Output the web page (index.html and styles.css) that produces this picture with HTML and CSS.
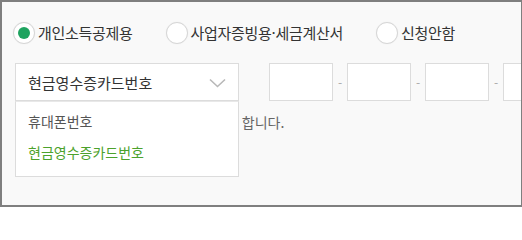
FILE: index.html
```html
<!DOCTYPE html>
<html lang="ko">
<head>
<meta charset="utf-8">
<link rel="stylesheet" href="styles.css">
</head>
<body>
<div class="frame">
  <div class="radios">
    <label class="radio">
      <span class="dot checked"></span>
      <span class="rlabel">개인소득공제용</span>
    </label>
    <label class="radio">
      <span class="dot"></span>
      <span class="rlabel">사업자증빙용·세금계산서</span>
    </label>
    <label class="radio">
      <span class="dot"></span>
      <span class="rlabel">신청안함</span>
    </label>
  </div>
  <div class="inputs">
    <div class="select-wrap">
      <div class="select">
        <span class="sel-text">현금영수증카드번호</span>
        <svg class="chev" width="17" height="10" viewBox="0 0 17 10"><path d="M1 1.5 L8.5 8.5 L16 1.5" fill="none" stroke="#b8b8b8" stroke-width="1.6"/></svg>
      </div>
      <ul class="menu">
        <li>휴대폰번호</li>
        <li class="active">현금영수증카드번호</li>
      </ul>
    </div>
    <div class="nums">
      <span class="box"></span><span class="dash">-</span>
      <span class="box"></span><span class="dash">-</span>
      <span class="box"></span><span class="dash">-</span>
      <span class="box"></span>
    </div>
  </div>
  <p class="note">카드번호 또는 휴대폰번호를 입력해야 합니다.</p>
</div>
</body>
</html>
```
FILE: styles.css
```css
html, body {
  margin: 0;
  padding: 0;
  background: #fff;
}
.frame {
  width: 522px;
  height: 207px;
  box-sizing: border-box;
  border: 2px solid #7f7f7f;
  border-right-width: 1px;
  background: #f9f9f9;
  padding: 20px 0 0 11px;
  overflow: hidden;
  font-family: "Noto Sans CJK KR", "Noto Sans", sans-serif;
  color: #333;
  position: relative;
}
.radios {
  display: flex;
  align-items: center;
  gap: 33px;
  height: 22px;
}
.radio {
  display: flex;
  align-items: center;
  gap: 3px;
}
.dot {
  width: 22px;
  height: 22px;
  box-sizing: border-box;
  border: 1px solid #d6d6d6;
  border-radius: 50%;
  background: #fff;
  display: flex;
  align-items: center;
  justify-content: center;
  box-shadow: 0 0 1px #e6e6e6;
}
.dot.checked::after {
  content: "";
  width: 12px;
  height: 12px;
  border-radius: 50%;
  background: #1ea35f;
}
.rlabel {
  font-size: 15px;
  line-height: 22px;
  color: #333;
  letter-spacing: -0.3px;
}
.inputs {
  display: flex;
  margin-top: 19px;
  margin-left: 2px;
  gap: 30px;
  position: relative;
  z-index: 2;
}
.select-wrap {
  position: relative;
}
.select {
  width: 224px;
  height: 38px;
  box-sizing: border-box;
  border: 1px solid #dcdcdc;
  background: #fff;
  display: flex;
  align-items: center;
  padding: 0 12px 0 12px;
  font-size: 15px;
  color: #333;
}
.sel-text {
  flex: 1;
}
.chev {
  display: block;
  margin-top: 2px;
}
.menu {
  position: absolute;
  left: 0;
  top: 38px;
  width: 224px;
  height: 76px;
  box-sizing: border-box;
  margin: 0;
  padding: 9px 0 0 12px;
  list-style: none;
  background: #fff;
  border: 1px solid #dcdcdc;
  border-top-color: #e8e8e8;
}
.menu li {
  font-size: 14px;
  line-height: 20px;
  height: 20px;
  color: #555;
}
.menu li + li {
  margin-top: 11px;
}
.menu li.active {
  color: #4ca22c;
}
.nums {
  display: flex;
  align-items: center;
}
.box {
  width: 64px;
  height: 38px;
  box-sizing: border-box;
  border: 1px solid #dcdcdc;
  background: #fff;
}
.dash {
  width: 14px;
  text-align: center;
  font-size: 12px;
  color: #aaa;
}
.note {
  margin: 11px 0 0 7px;
  font-size: 14px;
  color: #666;
  line-height: 20px;
  position: relative;
  z-index: 1;
}
```
